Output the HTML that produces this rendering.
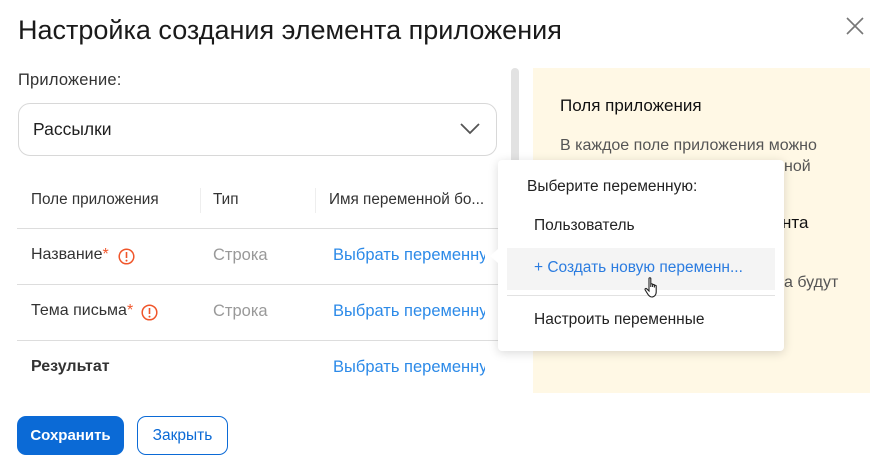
<!DOCTYPE html>
<html><head><meta charset="utf-8"><style>
*{box-sizing:border-box;margin:0;padding:0}
body{width:879px;height:470px;background:#fff;font-family:"Liberation Sans",sans-serif;position:relative;overflow:hidden;color:#222}
.a{position:absolute;white-space:nowrap}
</style></head><body>
<div class="a" style="left:18px;top:15px;font-size:27px;color:#1a1a1a">Настройка создания элемента приложения</div>
<svg class="a" style="left:845px;top:16px" width="20" height="20" viewBox="0 0 20 20"><path d="M2 2L18 18M18 2L2 18" stroke="#777" stroke-width="1.6" fill="none"/></svg>

<div class="a" style="left:18px;top:71px;font-size:16.5px;color:#333;letter-spacing:0.2px">Приложение:</div>
<div class="a" style="left:18px;top:103px;width:479px;height:53px;border:1px solid #d8d8d8;border-radius:12px"></div>
<div class="a" style="left:33px;top:119px;font-size:17.5px;color:#222">Рассылки</div>
<svg class="a" style="left:459px;top:122px" width="22" height="14" viewBox="0 0 22 14"><path d="M2 2L11 11L20 2" stroke="#555" stroke-width="1.8" fill="none"/></svg>

<div class="a" style="left:511px;top:68px;width:8px;height:100px;background:#e2e2e2;border-radius:4px"></div>

<div class="a" style="left:31px;top:191px;font-size:15.3px;color:#333">Поле приложения</div>
<div class="a" style="left:200px;top:188px;width:1px;height:25px;background:#eee"></div>
<div class="a" style="left:213px;top:191px;font-size:15.3px;color:#333">Тип</div>
<div class="a" style="left:315px;top:188px;width:1px;height:25px;background:#eee"></div>
<div class="a" style="left:329px;top:191px;font-size:15.3px;color:#333">Имя переменной бо...</div>
<div class="a" style="left:17px;top:228px;width:481px;height:1px;background:#ddd"></div>
<div class="a" style="left:17px;top:284px;width:481px;height:1px;background:#ddd"></div>
<div class="a" style="left:17px;top:340px;width:481px;height:1px;background:#ddd"></div>

<div class="a" style="left:31px;top:246px;font-size:16px;color:#333">Название<span style="color:#f0552a">*</span></div>
<svg class="a" style="left:118px;top:248px" width="17" height="17" viewBox="0 0 17 17"><circle cx="8.5" cy="8.5" r="7.3" stroke="#f0552a" stroke-width="1.5" fill="none"/><path d="M8.5 4v6" stroke="#f0552a" stroke-width="1.6"/><circle cx="8.5" cy="12.6" r="1" fill="#f0552a"/></svg>
<div class="a" style="left:31px;top:302px;font-size:16px;color:#333">Тема письма<span style="color:#f0552a">*</span></div>
<svg class="a" style="left:141px;top:304px" width="17" height="17" viewBox="0 0 17 17"><circle cx="8.5" cy="8.5" r="7.3" stroke="#f0552a" stroke-width="1.5" fill="none"/><path d="M8.5 4v6" stroke="#f0552a" stroke-width="1.6"/><circle cx="8.5" cy="12.6" r="1" fill="#f0552a"/></svg>
<div class="a" style="left:31px;top:358px;font-size:16px;font-weight:bold;color:#333">Результат</div>
<div class="a" style="left:213px;top:246px;font-size:16.5px;color:#999">Строка</div>
<div class="a" style="left:213px;top:302px;font-size:16.5px;color:#999">Строка</div>
<div class="a" style="left:333px;top:246px;width:152px;overflow:hidden;font-size:16.5px;color:#2c8ae8">Выбрать переменную</div>
<div class="a" style="left:333px;top:302px;width:152px;overflow:hidden;font-size:16.5px;color:#2c8ae8">Выбрать переменную</div>
<div class="a" style="left:333px;top:358px;width:152px;overflow:hidden;font-size:16.5px;color:#2c8ae8">Выбрать переменную</div>

<div class="a" style="left:17px;top:416px;width:107px;height:39px;background:#0b6ad6;border-radius:9px;color:#fff;font-weight:bold;font-size:15px;text-align:center;line-height:39px">Сохранить</div>
<div class="a" style="left:137px;top:416px;width:91px;height:39px;border:1px solid #0b6ad6;border-radius:9px;color:#0b6ad6;font-size:15.5px;text-align:center;line-height:37px">Закрыть</div>

<div class="a" style="left:533px;top:68px;width:337px;height:325px;background:#fff8e5"></div>
<div class="a" style="left:560px;top:96px;font-size:17px;color:#111">Поля приложения</div>
<div class="a" style="left:560px;top:133px;font-size:16px;color:#555;line-height:25px">В каждое поле приложения можно</div>
<div class="a" style="left:784px;top:158px;font-size:16px;color:#555">ной</div>
<div class="a" style="left:782px;top:213px;font-size:17px;color:#111">нта</div>
<div class="a" style="left:784px;top:274px;font-size:16px;color:#555">а будут</div>

<div class="a" style="left:498px;top:160px;width:286px;height:191px;background:#fff;border-radius:4px;box-shadow:0 2px 10px rgba(0,0,0,0.15)"></div>
<div class="a" style="left:490px;top:249px;width:0;height:0;border-top:7px solid transparent;border-bottom:7px solid transparent;border-right:8px solid #fff"></div>
<div class="a" style="left:527px;top:178px;font-size:15.5px;color:#222">Выберите переменную:</div>
<div class="a" style="left:534px;top:217px;font-size:15.5px;color:#222">Пользователь</div>
<div class="a" style="left:507px;top:248px;width:268px;height:42px;background:#f4f4f4"></div>
<div class="a" style="left:534px;top:259px;font-size:15.5px;color:#2b7ce0">+ Создать новую переменн...</div>
<div class="a" style="left:507px;top:295px;width:268px;height:1px;background:#e2e2e2"></div>
<div class="a" style="left:534px;top:311px;font-size:15.5px;color:#222">Настроить переменные</div>
<svg class="a" style="left:644px;top:276px" width="20" height="24" viewBox="0 0 20 24"><path d="M5 2.5c0-1 1.8-1 1.8 0V11V8.5c0-1 1.8-1 1.8 0V11V9.2c0-1 1.8-1 1.8 0V11.5V10c0-1 1.8-1 1.8 0v6c0 3-2 5-4.5 5H8c-2 0-3-1.2-4-2.6L1.2 14c-.6-1 .6-2 1.5-1.2L5 15V2.5z" fill="#fff" stroke="#222" stroke-width="1.1"/></svg>
</body></html>
